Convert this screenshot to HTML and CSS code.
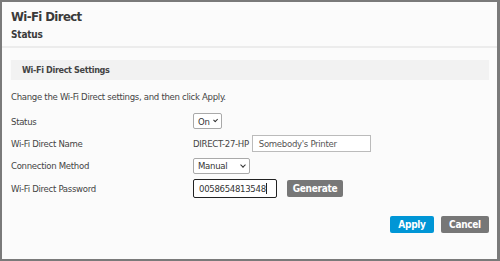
FILE: index.html
```html
<!DOCTYPE html>
<html lang="en">
<head>
    <meta charset="UTF-8">
    <meta name="viewport" content="width=device-width, initial-scale=1.0">
    <title>Wi-Fi Direct</title>
    <link rel="stylesheet" href="styles.css">
</head>
<body>

    <div class="frame">
        <!-- Cabecalho -->
        <div class="page-header">
            <div class="page-title">Wi-Fi Direct</div>
            <div class="page-subtitle">Status</div>
        </div>

        <div class="content">
            <div class="section-title">Wi-Fi Direct Settings</div>

            <p class="intro">Change the Wi-Fi Direct settings, and then click Apply.</p>

            <div class="form-grid">
                <div class="label">Status</div>
                <div class="field">
                    <div class="select select-small">On <span class="caret"></span></div>
                </div>

                <div class="label">Wi-Fi Direct Name</div>
                <div class="field">
                    <span class="prefix">DIRECT-27-HP</span>
                    <div class="input input-name">Somebody's Printer</div>
                </div>

                <div class="label">Connection Method</div>
                <div class="field">
                    <div class="select select-wide">Manual <span class="caret"></span></div>
                </div>

                <div class="label">Wi-Fi Direct Password</div>
                <div class="field">
                    <div class="input input-pass focused">0058654813548<span class="cursor"></span></div>
                    <a href="#" class="btn btn-gray btn-generate">Generate</a>
                </div>
            </div>

            <div class="actions">
                <a href="#" class="btn btn-blue">Apply</a>
                <a href="#" class="btn btn-gray">Cancel</a>
            </div>
        </div>
    </div>

</body>
</html>
```

FILE: styles.css
```css
* {
    margin: 0;
    padding: 0;
    box-sizing: border-box;
}
body, html {
    width: 500px;
    height: 261px;
    font-family: "DejaVu Sans Condensed", "DejaVu Sans", sans-serif;
    color: #444;
    background: #fff;
}

.frame {
    width: 500px;
    height: 261px;
    border: 2px solid #7a7a7a;
    border-right-width: 3px;
    background: #fbfbfb;
}

/* Cabecalho */
.page-header {
    padding: 5px 9px 0 9px;
    height: 46px;
    border-bottom: 2px solid #ececec;
}
.page-title {
    font-size: 13px;
    font-weight: bold;
    letter-spacing: -0.6px;
    color: #3a3a3a;
    line-height: 19px;
}
.page-subtitle {
    font-size: 10px;
    font-weight: bold;
    letter-spacing: -0.2px;
    color: #3a3a3a;
    line-height: 15px;
    margin-top: 1px;
}

.content {
    padding: 12px 8px 0 9px;
}

.section-title {
    height: 20px;
    line-height: 20px;
    background: #f2f2f2;
    padding-left: 11px;
    font-size: 9px;
    font-weight: bold;
    letter-spacing: -0.35px;
    color: #444;
}

.intro {
    font-size: 9.5px;
    letter-spacing: -0.3px;
    margin-top: 10px;
    line-height: 14px;
}

/* Formulario */
.form-grid {
    display: grid;
    grid-template-columns: 182px auto;
    grid-auto-rows: 22.4px;
    margin-top: 6px;
    font-size: 9.5px;
    letter-spacing: -0.3px;
}
.label {
    display: flex;
    align-items: center;
}
.field {
    display: flex;
    align-items: center;
    gap: 3px;
}

.select {
    height: 16px;
    border: 1px solid #a9a9a9;
    border-radius: 2px;
    background: #fff;
    display: flex;
    align-items: center;
    justify-content: space-between;
    padding: 0 4px 0 4px;
    color: #333;
}
.select-small {
    width: 29px;
}
.select-wide {
    width: 57px;
}
.caret {
    width: 4px;
    height: 4px;
    border-right: 1px solid #333;
    border-bottom: 1px solid #333;
    transform: rotate(45deg);
    margin: -2px 0 0 4px;
}

.prefix {
    color: #444;
}

.input {
    height: 17px;
    border: 1px solid #bbb;
    background: #fff;
    display: flex;
    align-items: center;
    padding-left: 6px;
    color: #555;
}
.input-name {
    width: 119px;
}
.input-pass {
    width: 84px;
    height: 19px;
    color: #333;
    padding-left: 5px;
}
.input.focused {
    border: 1px solid #222;
    border-radius: 2px;
}
.cursor {
    width: 1px;
    height: 11px;
    background: #222;
}

/* Botoes */
.btn {
    display: inline-flex;
    align-items: center;
    justify-content: center;
    height: 17px;
    font-size: 10px;
    font-weight: bold;
    letter-spacing: -0.3px;
    color: #fff;
    text-decoration: none;
    border-radius: 2px;
}
.btn-gray {
    background: #777;
}
.btn-blue {
    background: #0096d6;
}
.btn-generate {
    width: 56px;
    margin-left: 7px;
}

.actions {
    display: flex;
    justify-content: flex-end;
    gap: 7px;
    margin-top: 16px;
}
.actions .btn-blue {
    width: 44px;
}
.actions .btn-gray {
    width: 48px;
}
```
